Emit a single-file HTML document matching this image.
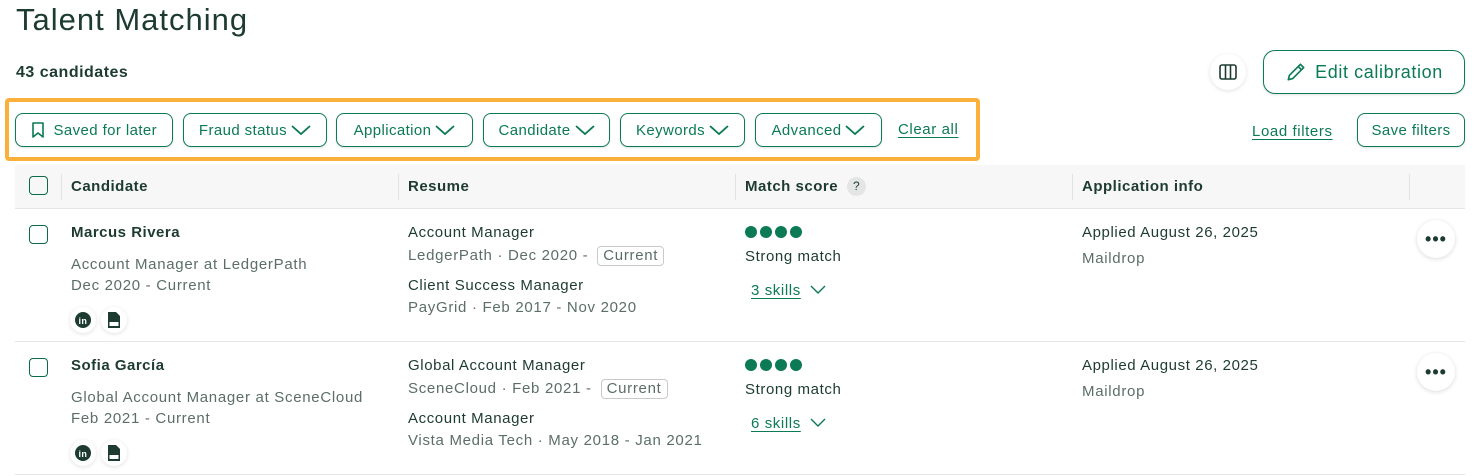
<!DOCTYPE html>
<html><head><style>
*{box-sizing:border-box;margin:0;padding:0}
body{width:1480px;height:476px;background:#fff;font-family:"Liberation Sans",sans-serif;color:#1d3b31;position:relative;overflow:hidden;letter-spacing:0.4px}
.a{position:absolute;white-space:nowrap}
.btn{position:absolute;top:113px;height:34px;border:1px solid #0b7a55;border-radius:8px;color:#0b7a55;font-size:15px;display:flex;align-items:center;justify-content:center;gap:4px;box-shadow:0 1px 2px rgba(0,0,0,.12);background:#fff}
.g{color:#0b7a55}
.m{color:#5c6e67;font-size:15px;letter-spacing:0.7px}
.t{font-size:15px;letter-spacing:0.6px}
.b{font-weight:bold;font-size:15px;letter-spacing:0.5px}
.cb{position:absolute;width:19px;height:19px;border:1.5px solid #0b6a4b;border-radius:4px}
.sep{position:absolute;top:174px;width:1px;height:26px;background:#e2e2e2}
.hl{position:absolute;left:15px;width:1450px;height:1px;background:#e6e6e6}
.tag{display:inline-block;border:1px solid #c9c9c9;border-radius:4px;padding:0 5px;line-height:18px;margin-left:4px}
.dot{display:inline-block;width:12px;height:12px;border-radius:50%;background:#0b7a55;margin-right:3px}
.ic{position:absolute;width:26px;height:26px;border-radius:50%;background:#fff;box-shadow:0 1px 4px rgba(0,0,0,.12);display:flex;align-items:center;justify-content:center}
.more{position:absolute;left:1417px;width:38px;height:38px;border-radius:50%;box-shadow:0 1px 5px rgba(0,0,0,.15);display:flex;align-items:center;justify-content:center;font-weight:bold;font-size:18px;letter-spacing:1px;color:#1d3b31;background:#fff}
u{text-underline-offset:3px}
</style></head><body>
<div class="a" style="left:16px;top:2px;font-size:31px;letter-spacing:1px;color:#1d3b31">Talent Matching</div>
<div class="a b" style="left:16px;top:64px;font-size:16px">43 candidates</div>
<div class="ic" style="left:1210px;top:54px;width:36px;height:36px"><svg width="18" height="16" viewBox="0 0 18 16"><rect x="1" y="1" width="16" height="14" rx="2" fill="none" stroke="#1d3b31" stroke-width="1.6"/><path d="M6.5 1v14M11.5 1v14" stroke="#1d3b31" stroke-width="1.6"/></svg></div>
<div class="btn" style="left:1263px;top:50px;width:202px;height:44px;border-radius:12px;font-size:18px;gap:8px;letter-spacing:0.6px"><svg width="22" height="22" viewBox="0 0 20 20"><path d="M3 17l1-4L14 3l3 3L7 16z M12 5l3 3" fill="none" stroke="#0b7a55" stroke-width="1.5" stroke-linejoin="round"/></svg>Edit calibration</div>
<div style="position:absolute;left:5px;top:98px;width:975px;height:63px;border:4px solid #fbb03b;border-radius:4px"></div>
<div class="btn" style="left:15px;width:158px"><svg width="14" height="16" viewBox="0 0 14 16"><path d="M2 1h10v14l-5-4-5 4z" fill="none" stroke="#0b7a55" stroke-width="1.6" stroke-linejoin="round"/></svg>&nbsp;Saved for later</div>
<div class="btn" style="left:183px;width:144px">Fraud status <svg width="20" height="12"><path d="M1 2l9 8 9-8" fill="none" stroke="#0b7a55" stroke-width="1.8"/></svg></div>
<div class="btn" style="left:336px;width:137px">Application <svg width="20" height="12"><path d="M1 2l9 8 9-8" fill="none" stroke="#0b7a55" stroke-width="1.8"/></svg></div>
<div class="btn" style="left:483px;width:127px">Candidate <svg width="20" height="12"><path d="M1 2l9 8 9-8" fill="none" stroke="#0b7a55" stroke-width="1.8"/></svg></div>
<div class="btn" style="left:620px;width:125px">Keywords <svg width="20" height="12"><path d="M1 2l9 8 9-8" fill="none" stroke="#0b7a55" stroke-width="1.8"/></svg></div>
<div class="btn" style="left:755px;width:127px">Advanced <svg width="20" height="12"><path d="M1 2l9 8 9-8" fill="none" stroke="#0b7a55" stroke-width="1.8"/></svg></div>
<div class="a g t" style="left:898px;top:121px"><u>Clear all</u></div>
<div class="a g t" style="left:1252px;top:123px"><u>Load filters</u></div>
<div class="btn" style="left:1357px;width:108px">Save filters</div>
<div style="position:absolute;left:15px;top:165px;width:1450px;height:43px;background:#f7f7f7"></div>
<div class="cb" style="left:29px;top:176px"></div>
<div class="sep" style="left:61px"></div><div class="sep" style="left:398px"></div><div class="sep" style="left:735px"></div><div class="sep" style="left:1072px"></div><div class="sep" style="left:1409px"></div>
<div class="a b" style="left:71px;top:178px">Candidate</div>
<div class="a b" style="left:408px;top:178px">Resume</div>
<div class="a b" style="left:745px;top:178px">Match score</div>
<div class="a" style="left:847px;top:177px;width:19px;height:19px;border-radius:50%;background:#e3e6e4;font-size:12px;text-align:center;line-height:19px">?</div>
<div class="a b" style="left:1082px;top:178px">Application info</div>
<div class="hl" style="top:208px"></div>
<!-- row 1 -->
<div class="cb" style="left:29px;top:225px"></div>
<div class="a b" style="left:71px;top:224px">Marcus Rivera</div>
<div class="a m" style="left:71px;top:256px">Account Manager at LedgerPath</div>
<div class="a m" style="left:71px;top:277px">Dec 2020 - Current</div>
<div class="ic" style="left:70px;top:307px"><svg width="16" height="16"><circle cx="8" cy="8" r="8" fill="#1d3b31"/><text x="3.5" y="12" font-size="9" font-weight="bold" fill="#fff" font-family="Liberation Sans">in</text></svg></div>
<div class="ic" style="left:101px;top:307px"><svg width="12" height="16"><path d="M0 0h8l4 4v12H0z" fill="#1d3b31"/><rect x="1.5" y="10" width="9" height="4" fill="#fff"/></svg></div>
<div class="a t" style="left:408px;top:224px">Account Manager</div>
<div class="a m" style="left:408px;top:246px">LedgerPath · Dec 2020 - <span class="tag">Current</span></div>
<div class="a t" style="left:408px;top:277px">Client Success Manager</div>
<div class="a m" style="left:408px;top:299px">PayGrid · Feb 2017 - Nov 2020</div>
<div class="a" style="left:745px;top:225px"><span class="dot"></span><span class="dot"></span><span class="dot"></span><span class="dot"></span></div>
<div class="a t" style="left:745px;top:248px">Strong match</div>
<div class="a g t" style="left:751px;top:282px"><u>3 skills</u> &nbsp;<svg width="16" height="10"><path d="M1 1l7 7 7-7" fill="none" stroke="#0b7a55" stroke-width="1.4"/></svg></div>
<div class="a t" style="left:1082px;top:224px">Applied August 26, 2025</div>
<div class="a m" style="left:1082px;top:250px">Maildrop</div>
<div class="more" style="top:220px">•••</div>
<div class="hl" style="top:341px"></div>
<!-- row 2 -->
<div class="cb" style="left:29px;top:358px"></div>
<div class="a b" style="left:71px;top:357px">Sofia García</div>
<div class="a m" style="left:71px;top:389px">Global Account Manager at SceneCloud</div>
<div class="a m" style="left:71px;top:410px">Feb 2021 - Current</div>
<div class="ic" style="left:70px;top:440px"><svg width="16" height="16"><circle cx="8" cy="8" r="8" fill="#1d3b31"/><text x="3.5" y="12" font-size="9" font-weight="bold" fill="#fff" font-family="Liberation Sans">in</text></svg></div>
<div class="ic" style="left:101px;top:440px"><svg width="12" height="16"><path d="M0 0h8l4 4v12H0z" fill="#1d3b31"/><rect x="1.5" y="10" width="9" height="4" fill="#fff"/></svg></div>
<div class="a t" style="left:408px;top:357px">Global Account Manager</div>
<div class="a m" style="left:408px;top:379px">SceneCloud · Feb 2021 - <span class="tag">Current</span></div>
<div class="a t" style="left:408px;top:410px">Account Manager</div>
<div class="a m" style="left:408px;top:432px">Vista Media Tech · May 2018 - Jan 2021</div>
<div class="a" style="left:745px;top:358px"><span class="dot"></span><span class="dot"></span><span class="dot"></span><span class="dot"></span></div>
<div class="a t" style="left:745px;top:381px">Strong match</div>
<div class="a g t" style="left:751px;top:415px"><u>6 skills</u> &nbsp;<svg width="16" height="10"><path d="M1 1l7 7 7-7" fill="none" stroke="#0b7a55" stroke-width="1.4"/></svg></div>
<div class="a t" style="left:1082px;top:357px">Applied August 26, 2025</div>
<div class="a m" style="left:1082px;top:383px">Maildrop</div>
<div class="more" style="top:353px">•••</div>
<div class="hl" style="top:474px"></div>
</body></html>
